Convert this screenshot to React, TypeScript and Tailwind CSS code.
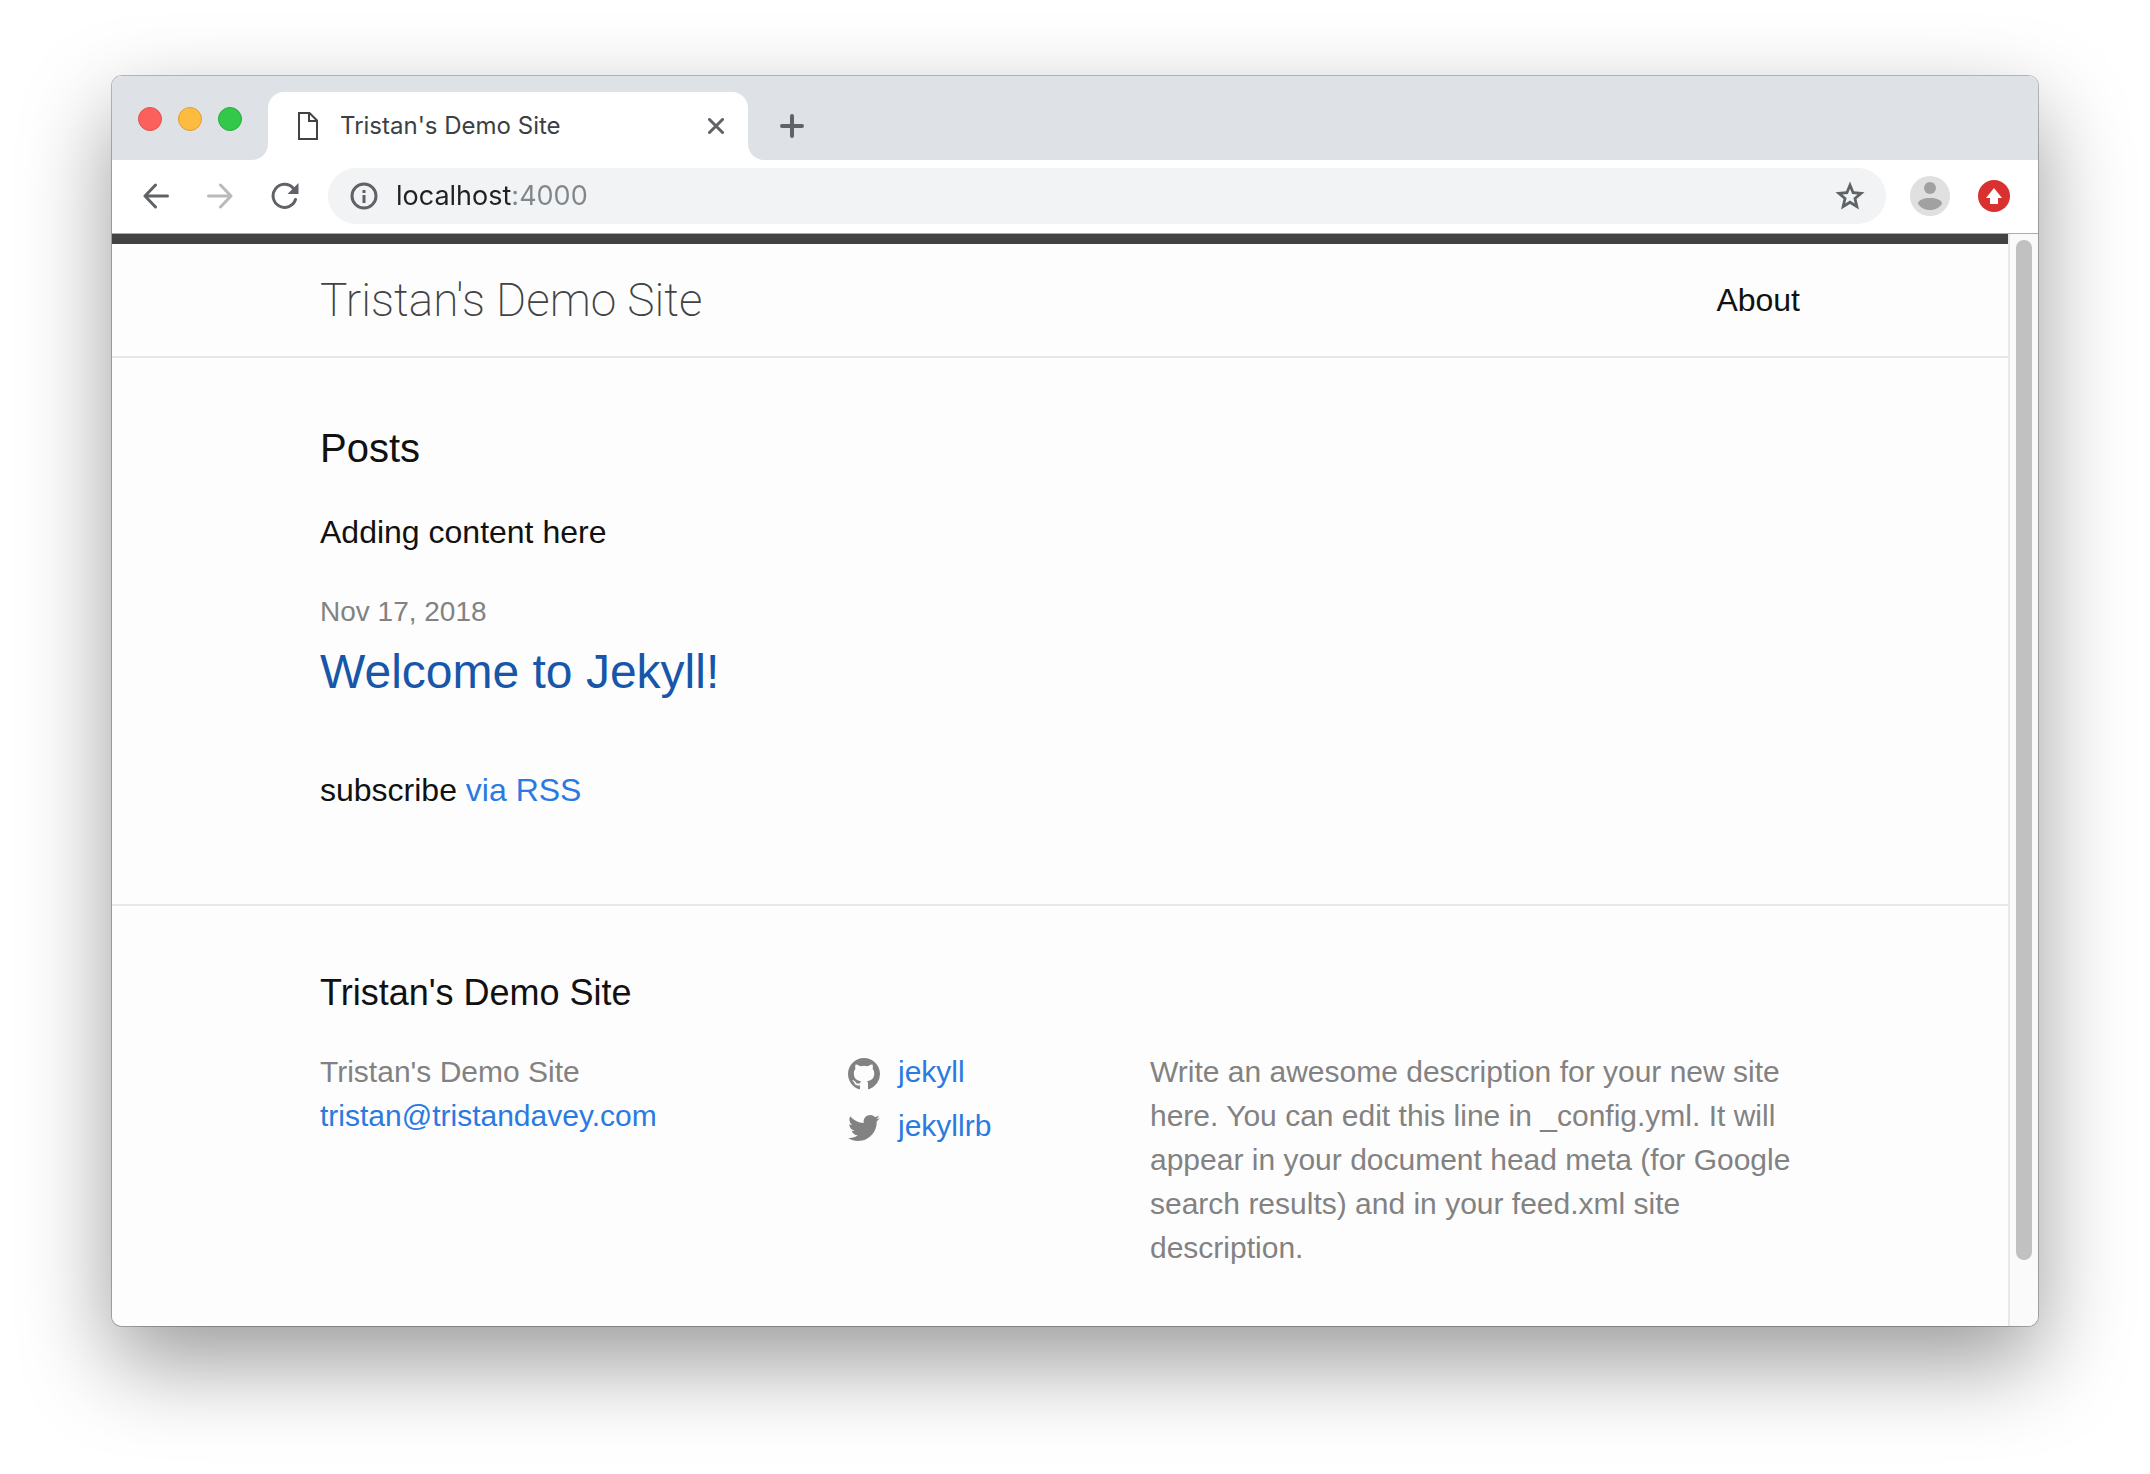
import React from "react";

const lights = [
  { label: "Close window", color: "bg-[#fc605c] border-[#e2504b]" },
  { label: "Minimize window", color: "bg-[#fdbc40] border-[#de9f34]" },
  { label: "Zoom window", color: "bg-[#34c84a] border-[#2aa93a]" },
];

function PageIcon() {
  return (
    <svg width="20" height="28" viewBox="0 0 20 28" fill="none" stroke="#424242" strokeWidth="2" aria-hidden="true">
      <path d="M1 1H11.5L19 8.5V27H1Z" />
      <path d="M11 1V9H19" />
    </svg>
  );
}

function CloseIcon() {
  return (
    <svg width="16" height="16" viewBox="0 0 16 16" stroke="#5f6368" strokeWidth="3" strokeLinecap="round" aria-hidden="true">
      <path d="M1.5 1.5L14.5 14.5M14.5 1.5L1.5 14.5" />
    </svg>
  );
}

function PlusIcon() {
  return (
    <svg width="24" height="24" viewBox="0 0 24 24" stroke="#5f6368" strokeWidth="4" strokeLinecap="round" aria-hidden="true">
      <path d="M12 2V22M2 12H22" />
    </svg>
  );
}

function BackIcon() {
  return (
    <svg width="26" height="26" viewBox="0 0 26 26" fill="none" stroke="#5f6368" strokeWidth="3" strokeLinecap="round" strokeLinejoin="round" aria-hidden="true">
      <path d="M12.5 2L2 13L12.5 24M2 13H24.5" />
    </svg>
  );
}

function ForwardIcon() {
  return (
    <svg width="26" height="26" viewBox="0 0 26 26" fill="none" stroke="#bababc" strokeWidth="3" strokeLinecap="round" strokeLinejoin="round" aria-hidden="true">
      <path d="M13.5 2L24 13L13.5 24M24 13H1.5" />
    </svg>
  );
}

function ReloadIcon() {
  return (
    <svg width="28" height="28" viewBox="0 0 28 28" fill="none" aria-hidden="true">
      <path d="M24.5 17.5A11.5 11.5 0 1 1 22 6" stroke="#5f6368" strokeWidth="3" strokeLinecap="round" />
      <path d="M27.5 1V12H16.5Z" fill="#5f6368" />
    </svg>
  );
}

function InfoIcon() {
  return (
    <svg width="28" height="28" viewBox="0 0 28 28" fill="none" aria-hidden="true">
      <circle cx="14" cy="14" r="12" stroke="#5f6368" strokeWidth="3" />
      <path d="M12.5 8H15.5V11H12.5ZM12.5 13H15.5V21H12.5Z" fill="#5f6368" />
    </svg>
  );
}

function StarIcon() {
  return (
    <svg width="30" height="30" viewBox="0 0 30 30" aria-hidden="true">
      <path
        fill="#5f6368"
        fillRule="evenodd"
        d="M15 0.5L19 10.300L29.500 11.200L21.500 18.100L24 28.500L15 23L6 28.500L8.500 18.100L0.500 11.200L11 10.300ZM15 7.700L12.900 12.900L7.400 13.400L11.600 17L10.300 22.400L15 19.500L19.700 22.400L18.400 17L22.600 13.400L17.100 12.900Z"
      />
    </svg>
  );
}

function AvatarIcon() {
  return (
    <svg width="40" height="40" viewBox="0 0 40 40" aria-hidden="true">
      <circle cx="20" cy="20" r="20" fill="#e0e0e0" />
      <circle cx="20" cy="12" r="6" fill="#a1a1a1" />
      <path d="M8 27.5C8 24 14 22 20 22S32 24 32 27.5C30 31.500 25.500 34 20 34S10 31.500 8 27.500Z" fill="#a1a1a1" />
    </svg>
  );
}

function UpdateIcon() {
  return (
    <svg width="32" height="32" viewBox="0 0 32 32" aria-hidden="true">
      <circle cx="16" cy="16" r="16" fill="#d93030" />
      <path d="M16 8L24 18H20V24H12V18H8Z" fill="#fff" />
    </svg>
  );
}

function GithubIcon() {
  return (
    <svg className="mt-1 size-8" viewBox="0 0 16 16" fill="#828282" aria-hidden="true">
      <path d="M8 0C3.58 0 0 3.58 0 8c0 3.54 2.29 6.53 5.47 7.59.4.07.55-.17.55-.38 0-.19-.01-.82-.01-1.49-2.01.37-2.53-.49-2.69-.94-.09-.23-.48-.94-.82-1.13-.28-.15-.68-.52-.01-.53.63-.01 1.08.58 1.23.82.72 1.21 1.87.87 2.33.66.07-.52.28-.87.51-1.07-1.78-.2-3.64-.89-3.64-3.95 0-.87.31-1.59.82-2.15-.08-.2-.36-1.02.08-2.12 0 0 .67-.21 2.2.82.64-.18 1.32-.27 2-.27s1.36.09 2 .27c1.53-1.04 2.2-.82 2.2-.82.44 1.1.16 1.92.08 2.12.51.56.82 1.27.82 2.15 0 3.07-1.87 3.75-3.65 3.95.29.25.54.73.54 1.48 0 1.07-.01 1.93-.01 2.2 0 .21.15.46.55.38A8.01 8.01 0 0 0 16 8c0-4.42-3.58-8-8-8Z" />
    </svg>
  );
}

function TwitterIcon() {
  return (
    <svg className="mt-1 size-8" viewBox="0 0 16 16" fill="#828282" aria-hidden="true">
      <path d="M15.969 3.058c-.586.26-1.217.436-1.878.515.675-.405 1.194-1.045 1.438-1.809-.632.375-1.332.647-2.076.793-.596-.636-1.446-1.033-2.387-1.033-1.806 0-3.27 1.464-3.27 3.27 0 .256.029.506.085.745C5.163 5.404 2.753 4.102 1.14 2.124.859 2.607.698 3.168.698 3.767c0 1.134.577 2.135 1.455 2.722-.536-.017-1.04-.164-1.481-.409v.041c0 1.584 1.127 2.906 2.623 3.206-.274.075-.563.115-.861.115-.211 0-.416-.021-.615-.059.416 1.299 1.624 2.245 3.055 2.271-1.119.877-2.529 1.4-4.061 1.4-.264 0-.524-.015-.78-.046 1.447.928 3.166 1.469 5.013 1.469 6.015 0 9.304-4.983 9.304-9.304 0-.142-.003-.283-.009-.423.639-.461 1.194-1.037 1.632-1.692Z" />
    </svg>
  );
}

function TabStrip() {
  return (
    <div className="flex h-21 bg-white">
      <div className="flex w-39 gap-4 rounded-br-2xl bg-[#dee1e6] pt-[31px] pl-[26px]">
        {lights.map((l) => (
          <button key={l.label} aria-label={l.label} className={"size-6 rounded-full border " + l.color} />
        ))}
      </div>
      <div className="w-120 bg-[#dee1e6] pt-4">
        <div className="flex h-17 items-center rounded-t-2xl bg-white pr-6 pl-[30px]">
          <PageIcon />
          <span className="ml-[22px] flex-1 font-['Inter'] text-2xl text-[#3c4043]">Tristan's Demo Site</span>
          <button aria-label="Close tab"><CloseIcon /></button>
        </div>
      </div>
      <div className="flex flex-1 items-center rounded-bl-2xl bg-[#dee1e6] pt-4 pl-8">
        <button aria-label="New tab"><PlusIcon /></button>
      </div>
    </div>
  );
}

function Toolbar() {
  return (
    <div className="flex items-center border-b border-[#a9abae] bg-white pt-2 pr-7 pb-[9px] pl-[31px]">
      <div className="flex w-[185px] items-center gap-[38px]">
        <button aria-label="Back"><BackIcon /></button>
        <button aria-label="Forward"><ForwardIcon /></button>
        <button aria-label="Reload"><ReloadIcon /></button>
      </div>
      <div className="flex h-14 flex-1 items-center gap-[18px] rounded-full bg-[#f1f3f4] pr-[21px] pl-[22px]">
        <button aria-label="Site information"><InfoIcon /></button>
        <input
          aria-label="Address"
          defaultValue="localhost:4000"
          className="min-w-0 flex-1 bg-[linear-gradient(90deg,#202124_116px,#80868b_116px)] bg-clip-text font-['Inter'] text-[27px] text-transparent outline-none"
        />
        <button aria-label="Bookmark this page"><StarIcon /></button>
      </div>
      <button aria-label="Profile" className="ml-6"><AvatarIcon /></button>
      <button aria-label="Update available" className="ml-7"><UpdateIcon /></button>
    </div>
  );
}

const column = "mx-auto w-full max-w-[1600px] px-[60px]";

function Site() {
  return (
    <div className="min-w-0 flex-1 bg-[#fdfdfd] text-[32px] leading-12 text-[#111]">
      <header className="border-t-10 border-b-2 border-t-[#424242] border-b-[#e8e8e8]">
        <div className={column + " flex h-28 items-center justify-between"}>
          <a href="#home" className="font-['Roboto'] text-[46px] font-extralight text-[#424242]">Tristan's Demo Site</a>
          <nav><a href="#about">About</a></nav>
        </div>
      </header>
      <main className="py-15">
        <div className={column + " pb-[30px]"}>
          <h2 className="mb-[30px] text-[40px] leading-15">Posts</h2>
          <p className="mb-[30px]">Adding content here</p>
          <ul className="mb-15">
            <li>
              <span className="block text-[28px] leading-13 text-[#828282]">Nov 17, 2018</span>
              <h3 className="text-5xl leading-17"><a href="#welcome" className="text-[#1756a9]">Welcome to Jekyll!</a></h3>
            </li>
          </ul>
          <p>subscribe <a href="#feed" className="text-[#2a7ae2]">via RSS</a></p>
        </div>
      </main>
      <footer className="border-t-2 border-[#e8e8e8] pt-15 pb-14">
        <div className={column}>
          <h2 className="mb-[30px] text-4xl leading-[54px]">Tristan's Demo Site</h2>
          <div className="grid grid-cols-[528fr_302fr_650fr] text-[30px] leading-11 text-[#828282]">
            <ul>
              <li>Tristan's Demo Site</li>
              <li><a href="mailto:tristan@tristandavey.com" className="text-[#2a7ae2]">tristan@tristandavey.com</a></li>
            </ul>
            <ul className="flex flex-col gap-[10px]">
              <li><a href="#github" className="flex items-center gap-[18px] text-[#2a7ae2]"><GithubIcon />jekyll</a></li>
              <li><a href="#twitter" className="flex items-center gap-[18px] text-[#2a7ae2]"><TwitterIcon />jekyllrb</a></li>
            </ul>
            <p>Write an awesome description for your new site here. You can edit this line in _config.yml. It will appear in your document head meta (for Google search results) and in your feed.xml site description.</p>
          </div>
        </div>
      </footer>
    </div>
  );
}

export default function App() {
  return (
    <div className="bg-white px-28 pt-19 pb-37 font-['Liberation_Sans',sans-serif]">
      <div className="overflow-hidden rounded-[10px] shadow-[0_0_0_1px_rgba(0,0,0,0.25),0_36px_90px_rgba(0,0,0,0.4)]">
        <TabStrip />
        <Toolbar />
        <div className="flex">
          <Site />
          <div className="flex w-[30px] flex-col border-l-2 border-[#e8e8e8] bg-[#fafafa] pt-[6px] pl-[6px]">
            <div className="w-4 flex-[1020] rounded-full bg-[#c1c1c1]" />
            <div className="flex-[66]" />
          </div>
        </div>
      </div>
    </div>
  );
}
